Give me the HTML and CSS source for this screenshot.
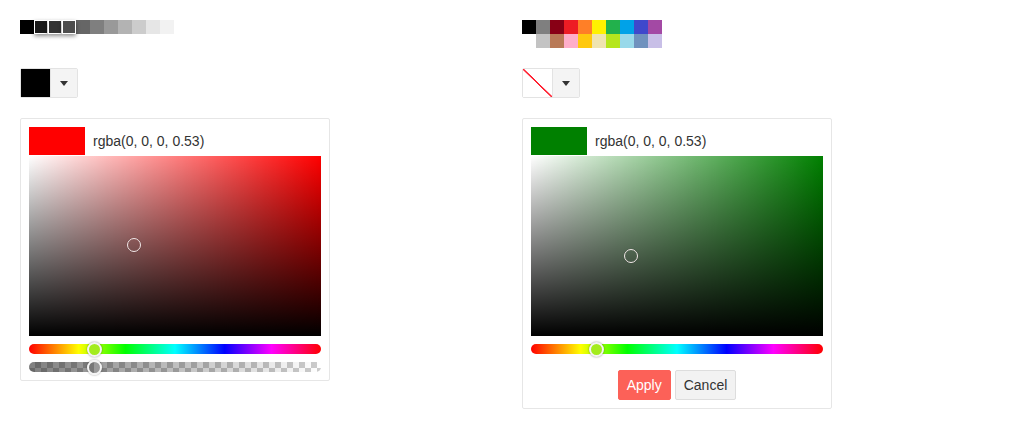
FILE: index.html
```html
<!DOCTYPE html>
<html>
<head>
<meta charset="utf-8">
<link rel="stylesheet" href="styles.css">
</head>
<body>
<div class="page">
  <div class="col">
    <div class="palette-area">
      <div class="palette row-only">
        <span class="sw" style="background:#000"></span>
        <span class="sw sel" style="background:#1a1a1a"></span>
        <span class="sw sel" style="background:#333"></span>
        <span class="sw sel" style="background:#4d4d4d"></span>
        <span class="sw" style="background:#666"></span>
        <span class="sw" style="background:#7f7f7f"></span>
        <span class="sw" style="background:#999"></span>
        <span class="sw" style="background:#b3b3b3"></span>
        <span class="sw" style="background:#ccc"></span>
        <span class="sw" style="background:#e6e6e6"></span>
        <span class="sw" style="background:#f2f2f2"></span>
      </div>
    </div>
    <div class="trigger">
      <span class="trig-swatch black"></span>
      <span class="trig-arrow"><span class="caret"></span></span>
    </div>
    <div class="panel">
      <div class="head">
        <span class="preview red"></span>
        <span class="value">rgba(0, 0, 0, 0.53)</span>
      </div>
      <div class="sat hue-red">
        <span class="sat-handle" style="left:105px;top:89px"></span>
      </div>
      <div class="hue">
        <span class="knob" style="left:65px"></span>
      </div>
      <div class="alpha">
        <span class="knob alpha-knob" style="left:65px"></span>
      </div>
    </div>
  </div>

  <div class="col">
    <div class="palette-area">
      <div class="palette grid">
        <span class="sw" style="background:#000"></span>
        <span class="sw" style="background:#7f7f7f"></span>
        <span class="sw" style="background:#880015"></span>
        <span class="sw" style="background:#ed1c24"></span>
        <span class="sw" style="background:#ff7f27"></span>
        <span class="sw" style="background:#fff200"></span>
        <span class="sw" style="background:#22b14c"></span>
        <span class="sw" style="background:#00a2e8"></span>
        <span class="sw" style="background:#3f48cc"></span>
        <span class="sw" style="background:#a349a4"></span>
        <span class="sw" style="background:#fff"></span>
        <span class="sw" style="background:#c3c3c3"></span>
        <span class="sw" style="background:#b97a57"></span>
        <span class="sw" style="background:#ffaec9"></span>
        <span class="sw" style="background:#ffc90e"></span>
        <span class="sw" style="background:#efe4b0"></span>
        <span class="sw" style="background:#b5e61d"></span>
        <span class="sw" style="background:#99d9ea"></span>
        <span class="sw" style="background:#7092be"></span>
        <span class="sw" style="background:#c8bfe7"></span>
      </div>
    </div>
    <div class="trigger">
      <span class="trig-swatch none"></span>
      <span class="trig-arrow"><span class="caret"></span></span>
    </div>
    <div class="panel">
      <div class="head">
        <span class="preview green"></span>
        <span class="value">rgba(0, 0, 0, 0.53)</span>
      </div>
      <div class="sat hue-green">
        <span class="sat-handle" style="left:100px;top:100px"></span>
      </div>
      <div class="hue">
        <span class="knob" style="left:65px"></span>
      </div>
      <div class="actions">
        <button class="btn apply">Apply</button>
        <button class="btn cancel">Cancel</button>
      </div>
    </div>
  </div>
</div>
</body>
</html>
```

FILE: styles.css
```css
* { box-sizing: border-box; }
html, body { margin: 0; padding: 0; background: #fff; }
body { font-family: "Liberation Sans", Arial, sans-serif; color: #333; font-size: 14px; }

.page {
  display: flex;
  gap: 192px;
  padding: 20px 0 0 20px;
}
.col { width: 310px; display: flex; flex-direction: column; }

.palette-area { height: 48px; }
.palette { display: flex; }
.palette.grid {
  display: grid;
  grid-template-columns: repeat(10, 14px);
  grid-auto-rows: 14px;
}
.sw { display: block; width: 14px; height: 14px; }
.sel {
  position: relative;
  box-shadow: inset 0 0 0 1px #fff, 0 2px 4px rgba(0,0,0,0.45);
  z-index: 1;
}

.trigger {
  display: flex;
  width: 58px;
  height: 30px;
  border: 1px solid #e3e3e3;
  border-radius: 2px;
  margin-bottom: 20px;
}
.trig-swatch { width: 29px; height: 28px; display: block; }
.trig-swatch.black { background: #000; }
.trig-swatch.none {
  background: linear-gradient(to top right, #fff calc(50% - 1px), #f23 calc(50% - 0.5px), #f23 calc(50% + 0.5px), #fff calc(50% + 1px));
}
.trig-arrow {
  flex: 1;
  border-left: 1px solid #e3e3e3;
  background: #f4f4f4;
  display: flex;
  align-items: center;
  justify-content: center;
}
.caret {
  width: 0; height: 0;
  border-left: 4.5px solid transparent;
  border-right: 4.5px solid transparent;
  border-top: 5px solid #333;
  margin-top: 1px;
}

.panel {
  width: 310px;
  border: 1px solid #e6e6e6;
  border-radius: 2px;
  padding: 8px;
  background: #fff;
}
.head { display: flex; align-items: center; height: 28px; gap: 8px; }
.preview { width: 56px; height: 28px; display: block; }
.preview.red { background: #f00; }
.preview.green { background: #008000; }
.value { font-size: 14px; color: #333; }

.sat {
  position: relative;
  margin-top: 1px;
  height: 180px;
}
.hue-red {
  background: linear-gradient(to top, #000, rgba(0,0,0,0)), linear-gradient(to right, #fff, rgba(255,255,255,0)), #f00;
}
.hue-green {
  background: linear-gradient(to top, #000, rgba(0,0,0,0)), linear-gradient(to right, #fff, rgba(255,255,255,0)), #008000;
}
.sat-handle {
  position: absolute;
  width: 14px; height: 14px;
  margin: -7px 0 0 -7px;
  border: 1px solid #f2e8e8;
  border-radius: 50%;
  box-shadow: 0 0 1px rgba(0,0,0,0.3);
}

.hue {
  position: relative;
  margin-top: 8px;
  height: 10px;
  border-radius: 5px;
  background: linear-gradient(to right, #f00 0%, #ff0 17%, #0f0 33%, #0ff 50%, #00f 67%, #f0f 83%, #f00 100%);
}
.alpha {
  position: relative;
  margin-top: 8px;
  height: 10px;
  border-radius: 5px;
  background:
    linear-gradient(to right, rgba(0,0,0,0.5), rgba(0,0,0,0)),
    repeating-conic-gradient(#ccc 0 25%, #fff 0 50%) 0 0 / 12px 12px;
}
.knob {
  position: absolute;
  top: 50%;
  width: 15px; height: 15px;
  margin: -7.5px 0 0 -7.5px;
  border-radius: 50%;
  border: 2px solid #f4f4f4;
  background: #a3ec1e;
  box-shadow: 0 0 2px rgba(0,0,0,0.45);
}
.alpha-knob {
  background: linear-gradient(90deg, #777 50%, #999 50%);
}

.actions {
  display: flex;
  justify-content: center;
  gap: 4px;
  margin-top: 16px;
}
.btn {
  height: 30px;
  font-family: "Liberation Sans", Arial, sans-serif;
  font-size: 14px;
  padding: 0 8px;
  border-radius: 2px;
  cursor: pointer;
}
.apply { background: #fc6158; color: #fff; border: 1px solid #fc6158; }
.cancel { background: #f2f2f2; color: #333; border: 1px solid #ddd; }
```
